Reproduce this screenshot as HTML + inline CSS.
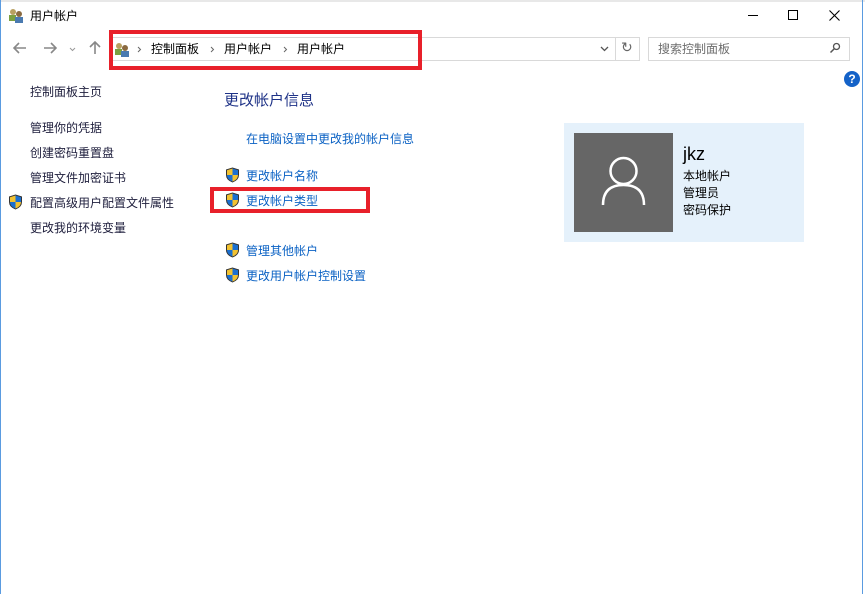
<!DOCTYPE html>
<html><head><meta charset="utf-8"><style>
*{margin:0;padding:0;box-sizing:border-box}
body{width:865px;height:594px;background:#fff;position:relative;overflow:hidden;font-family:"Liberation Sans","Noto Sans CJK SC",sans-serif;font-size:12px;color:#000}
.a{position:absolute;white-space:nowrap}
.side{color:#1e1e3c;font-size:12px}
.lnk{color:#0b62c4;font-size:12px}
.sh{position:absolute;width:15px;height:16px}
</style></head><body>
<div class="a" style="left:0;top:0;width:865px;height:2px;background:#e8e8e8"></div>
<div class="a" style="left:0;top:0;width:1px;height:594px;background:#5a9be0"></div>
<div class="a" style="left:862px;top:0;width:1px;height:594px;background:#5a9be0"></div>
<svg class="a" style="left:8px;top:7px" width="16" height="16" viewBox="0 0 16 16"><circle cx="5" cy="5" r="3" fill="#b8a060"/><rect x="1" y="8" width="7" height="6" fill="#7ba040"/><circle cx="11" cy="7" r="3" fill="#8a6a40"/><rect x="7" y="10" width="8" height="6" fill="#4a7ab0"/></svg>
<div class="a" style="left:30px;top:7px;font-size:12px">用户帐户</div>
<div class="a" style="left:748px;top:15px;width:10px;height:1px;background:#000"></div>
<div class="a" style="left:788px;top:10px;width:10px;height:10px;border:1px solid #000"></div>
<svg class="a" style="left:829px;top:10px" width="11" height="11"><path d="M0.5 0.5L10.5 10.5M10.5 0.5L0.5 10.5" stroke="#000" stroke-width="1.1"/></svg>
<svg class="a" style="left:13px;top:42px" width="14" height="12"><path d="M1 6H13M6 1L1 6L6 11" fill="none" stroke="#888" stroke-width="1.6"/></svg>
<svg class="a" style="left:43px;top:42px" width="14" height="12"><path d="M1 6H13M8 1L13 6L8 11" fill="none" stroke="#888" stroke-width="1.6"/></svg>
<svg class="a" style="left:69px;top:47px" width="7" height="5"><path d="M1 1L3.5 3.5L6 1" fill="none" stroke="#999" stroke-width="1"/></svg>
<svg class="a" style="left:89px;top:41px" width="12" height="14"><path d="M6 13V1M1 6L6 1L11 6" fill="none" stroke="#888" stroke-width="1.6"/></svg>
<div class="a" style="left:111px;top:37px;width:529px;height:24px;border:1px solid #d9d9d9"></div>
<div class="a" style="left:615px;top:37px;width:1px;height:24px;background:#d9d9d9"></div>
<svg class="a" style="left:600px;top:46px" width="9" height="6"><path d="M1 1L4.5 4.5L8 1" fill="none" stroke="#555" stroke-width="1.3"/></svg>
<div class="a" style="left:621px;top:39px;color:#666;font-size:14px">↻</div>
<svg class="a" style="left:114px;top:41px" width="16" height="16" viewBox="0 0 16 16"><circle cx="5" cy="5" r="3" fill="#b8a060"/><rect x="1" y="8" width="7" height="6" fill="#7ba040"/><circle cx="11" cy="7" r="3" fill="#8a6a40"/><rect x="7" y="10" width="8" height="6" fill="#4a7ab0"/></svg>
<svg class="a" style="left:137px;top:46px" width="5" height="7"><path d="M1 1L3.5 3.5L1 6" fill="none" stroke="#666" stroke-width="1"/></svg>
<div class="a" style="left:151px;top:40px">控制面板</div>
<svg class="a" style="left:210px;top:46px" width="5" height="7"><path d="M1 1L3.5 3.5L1 6" fill="none" stroke="#666" stroke-width="1"/></svg>
<div class="a" style="left:224px;top:40px">用户帐户</div>
<svg class="a" style="left:283px;top:46px" width="5" height="7"><path d="M1 1L3.5 3.5L1 6" fill="none" stroke="#666" stroke-width="1"/></svg>
<div class="a" style="left:297px;top:40px">用户帐户</div>
<div class="a" style="left:109px;top:30px;width:313px;height:40px;border:4px solid #e8202a"></div>
<div class="a" style="left:648px;top:37px;width:202px;height:24px;border:1px solid #d9d9d9"></div>
<div class="a" style="left:658px;top:40px;color:#6d6d6d">搜索控制面板</div>
<svg class="a" style="left:829px;top:42px" width="12" height="12" viewBox="0 0 12 12"><circle cx="7.5" cy="4.5" r="3" fill="none" stroke="#555" stroke-width="1.3"/><line x1="5.5" y1="6.5" x2="1.5" y2="10.5" stroke="#555" stroke-width="1.5"/></svg>
<div class="a" style="left:844px;top:71px;width:16px;height:16px;border-radius:50%;background:#1462c8;color:#fff;font-weight:bold;font-size:12px;text-align:center;line-height:16px">?</div>
<div class="a side" style="left:30px;top:83px">控制面板主页</div>
<div class="a side" style="left:30px;top:119px">管理你的凭据</div>
<div class="a side" style="left:30px;top:144px">创建密码重置盘</div>
<div class="a side" style="left:30px;top:169px">管理文件加密证书</div>
<div class="a side" style="left:30px;top:194px">配置高级用户配置文件属性</div>
<div class="a side" style="left:30px;top:219px">更改我的环境变量</div>
<div class="a" style="left:224px;top:89px;font-size:15px;color:#1e3287">更改帐户信息</div>
<div class="a lnk" style="left:246px;top:130px">在电脑设置中更改我的帐户信息</div>
<div class="a lnk" style="left:246px;top:167px">更改帐户名称</div>
<div class="a lnk" style="left:246px;top:192px">更改帐户类型</div>
<div class="a lnk" style="left:246px;top:242px">管理其他帐户</div>
<div class="a lnk" style="left:246px;top:267px">更改用户帐户控制设置</div>
<div class="a" style="left:210px;top:187px;width:160px;height:26px;border:4px solid #e8202a"></div>
<svg width="0" height="0" style="position:absolute"><defs><symbol id="s" viewBox="0 0 15 16"><path d="M7.5 0.5 L14 2.5 L14 8 Q14 13 7.5 15.5 Q1 13 1 8 L1 2.5 Z" fill="#333"/><path d="M7.5 1.5 L7.5 8 L13 8 L13 3.2 Z" fill="#1a6fd0"/><path d="M7.5 8 L7.5 14.5 Q2 12.5 2 8 Z" fill="#1a6fd0"/><path d="M7.5 1.5 L2 3.2 L2 8 L7.5 8 Z" fill="#f2c230"/><path d="M7.5 8 L13 8 Q13 12.5 7.5 14.5 Z" fill="#f2c230"/></symbol></defs></svg>
<svg class="sh" style="left:8px;top:194px"><use href="#s"/></svg>
<svg class="sh" style="left:225px;top:167px"><use href="#s"/></svg>
<svg class="sh" style="left:225px;top:192px"><use href="#s"/></svg>
<svg class="sh" style="left:225px;top:242px"><use href="#s"/></svg>
<svg class="sh" style="left:225px;top:267px"><use href="#s"/></svg>
<div class="a" style="left:564px;top:123px;width:240px;height:119px;background:#e5f1fb"></div>
<div class="a" style="left:574px;top:133px;width:99px;height:99px;background:#666"></div>
<svg class="a" style="left:574px;top:133px" width="99" height="99" viewBox="0 0 99 99"><circle cx="49.5" cy="38" r="13" fill="none" stroke="#fff" stroke-width="2.5"/><path d="M29 72 Q29 52 49.5 52 Q70 52 70 72" fill="none" stroke="#fff" stroke-width="2.5"/></svg>
<div class="a" style="left:683px;top:144px;font-size:18px">jkz</div>
<div class="a" style="left:683px;top:167px">本地帐户</div>
<div class="a" style="left:683px;top:184px">管理员</div>
<div class="a" style="left:683px;top:201px">密码保护</div>
</body></html>
